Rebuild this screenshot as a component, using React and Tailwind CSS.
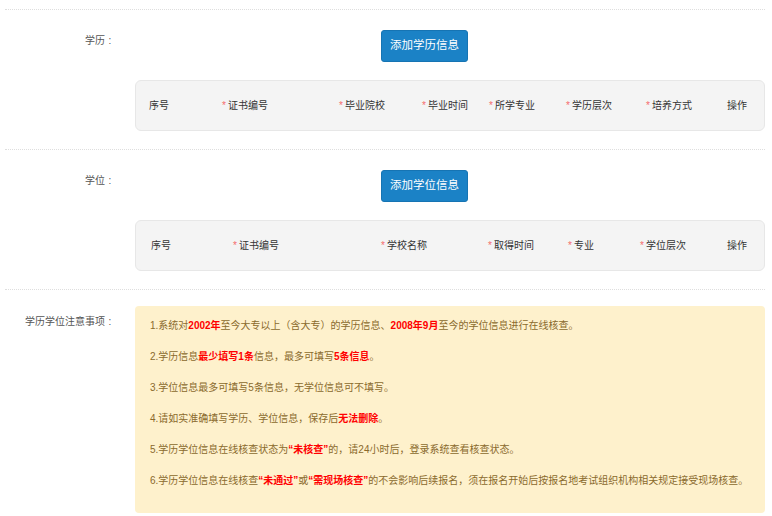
import React from 'react';

// header columns: [title, required, width]
const eduCols = [
  ['序号', false, 73],
  ['证书编号', true, 117],
  ['毕业院校', true, 83],
  ['毕业时间', true, 67],
  ['所学专业', true, 77],
  ['学历层次', true, 80],
  ['培养方式', true, 81],
  ['操作', false, 30],
];

const degreeCols = [
  ['序号', false, 82],
  ['证书编号', true, 148],
  ['学校名称', true, 107],
  ['取得时间', true, 80],
  ['专业', true, 72],
  ['学位层次', true, 87],
  ['操作', false, 30],
];

const Red = ({ children }) => <span className="font-bold text-[#ff0000]">{children}</span>;

const Label = ({ text, className }) => (
  <div className={`w-[130px] shrink-0 pr-[20px] text-right text-[10px] leading-[10px] text-[#555] ${className}`}>
    {text}
    <span className="inline-block w-[10px] text-center">:</span>
  </div>
);

function HeaderBox({ cols, pad }) {
  return (
    <div className={`mt-[18px] flex h-[51px] w-[630px] items-center rounded-[6px] border border-[#e7e7e7] bg-[#f4f4f4] ${pad}`}>
      {cols.map(([title, req, w]) => (
        <div key={title} style={{ width: w }} className="shrink-0 whitespace-nowrap text-[10px] text-[#333]">
          {req && <span className="mr-[2px] text-[#f56c6c]">*</span>}
          {title}
        </div>
      ))}
    </div>
  );
}

function Section({ label, btn, cols, pad }) {
  return (
    <div className="flex border-t border-dotted border-[#dedede] pt-[20px] pb-[18px]">
      <Label text={label} className="pt-[6px]" />
      <div className="flex flex-col">
        <button className="ml-[246px] h-[32px] w-[87px] rounded-[3px] border border-[#1674b3] bg-[#1b82c6] text-[11.5px] text-white">
          {btn}
        </button>
        <HeaderBox cols={cols} pad={pad} />
      </div>
    </div>
  );
}

const notices = [
  <>1.系统对<Red>2002年</Red>至今大专以上（含大专）的学历信息、<Red>2008年9月</Red>至今的学位信息进行在线核查。</>,
  <>2.学历信息<Red>最少填写1条</Red>信息，最多可填写<Red>5条信息</Red>。</>,
  <>3.学位信息最多可填写5条信息，无学位信息可不填写。</>,
  <>4.请如实准确填写学历、学位信息，保存后<Red>无法删除</Red>。</>,
  <>5.学历学位信息在线核查状态为<Red>“未核查”</Red>的，请24小时后，登录系统查看核查状态。</>,
  <>6.学历学位信息在线核查<Red>“未通过”</Red>或<Red>“需现场核查”</Red>的不会影响后续报名，须在报名开始后按报名地考试组织机构相关规定接受现场核查。</>,
];

export default function App() {
  return (
    <div
      className="h-[516px] w-[772px] overflow-hidden bg-white pt-[9px]"
      style={{ fontFamily: '"Liberation Sans", "Noto Sans CJK SC", sans-serif' }}
    >
      <div className="ml-[5px] w-[760px]">
        <Section label="学历" btn="添加学历信息" cols={eduCols} pad="pl-[13px]" />
        <Section label="学位" btn="添加学位信息" cols={degreeCols} pad="pl-[15px]" />

        {/* notes */}
        <div className="flex border-t border-dotted border-[#dedede] pt-[16px]">
          <Label text="学历学位注意事项" className="pt-[11px]" />
          <div className="w-[630px] rounded-[4px] bg-[#fef1cc] pl-[15px] pt-[4px] pb-[17px] text-[10px] leading-[31px] text-[#8a6a2c]">
            {notices.map((n, i) => (
              <div key={i} className="whitespace-nowrap">{n}</div>
            ))}
          </div>
        </div>
      </div>
    </div>
  );
}
